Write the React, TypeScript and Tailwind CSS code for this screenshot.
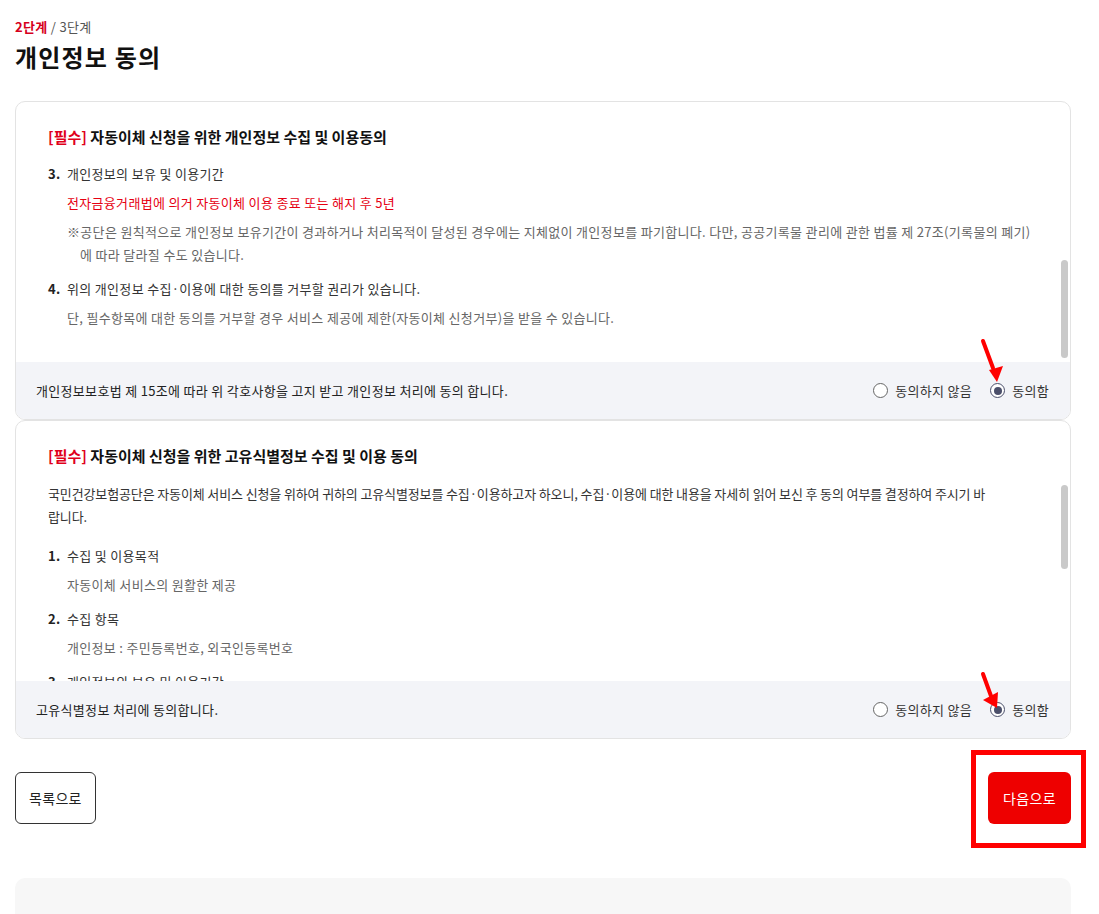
import { useEffect, useRef } from "react";

type Item = {
  no: string;
  title: string;
  body: React.ReactNode;
};

function Radio({ label, checked }: { label: string; checked?: boolean }) {
  return (
    <label className="flex items-center gap-[7px] text-[13px] text-[#333]">
      <span
        className={
          checked
            ? "flex h-[15px] w-[15px] items-center justify-center rounded-full border border-[#4b4f6a] bg-white"
            : "flex h-[15px] w-[15px] items-center justify-center rounded-full border border-[#666] bg-white"
        }
      >
        {checked && <span className="h-[8px] w-[8px] rounded-full bg-[#4b4f6a]" />}
      </span>
      {label}
    </label>
  );
}

function ItemList({ items }: { items: Item[] }) {
  return (
    <ol className="flex flex-col gap-[11px]">
      {items.map((it) => (
        <li key={it.no}>
          <div className="flex text-[13px] leading-[23px] text-[#333]">
            <span className="w-[19px] font-bold text-[#222]">{it.no}</span>
            <span>{it.title}</span>
          </div>
          <div className="mt-[6px] pl-[19px] text-[13px] leading-[23px] text-[#666]">{it.body}</div>
        </li>
      ))}
    </ol>
  );
}

function ConsentCard({
  title,
  statement,
  children,
  thumb,
  scrollToEnd,
}: {
  title: string;
  statement: string;
  children: React.ReactNode;
  thumb: string;
  scrollToEnd?: boolean;
}) {
  const ref = useRef<HTMLDivElement>(null);

  useEffect(() => {
    if (scrollToEnd && ref.current) ref.current.scrollTop = ref.current.scrollHeight;
  }, [scrollToEnd]);

  return (
    <section className="overflow-hidden rounded-[10px] border border-[#e3e3e3] bg-white">
      <h2 className="px-[32px] pt-[23px] text-[15px] font-bold leading-[24px] tracking-normal text-[#111]">
        <span className="text-[#e0001b]">[필수]</span> {title}
      </h2>
      <div className="relative mt-[14px]">
        <div ref={ref} className="h-[199px] overflow-y-auto pl-[32px] pr-[24px] [scrollbar-width:none]">
          {children}
        </div>
        {/* custom scrollbar thumb */}
        <div className={`absolute right-[2px] w-[7px] rounded-full bg-[#c9c9c9] ${thumb}`} />
      </div>
      <div className="flex h-[57px] items-center justify-between bg-[#f3f4f8] pl-[20px] pr-[21px]">
        <p className="text-[13px] text-[#222]">{statement}</p>
        <div className="flex items-center gap-[18px]">
          <Radio label="동의하지 않음" />
          <Radio label="동의함" checked />
        </div>
      </div>
    </section>
  );
}

const intro = (
  <p className="mb-[16px] text-[13px] leading-[23px] tracking-[-0.01em] text-[#333]">
    국민건강보험공단은 자동이체 서비스 신청을 위하여 귀하의 고유식별정보를 수집·이용하고자 하오니, 수집·이용에 대한
    내용을 자세히 읽어 보신 후 동의 여부를 결정하여 주시기 바<br />
    랍니다.
  </p>
);

const keepItem: Item = {
  no: "3.",
  title: "개인정보의 보유 및 이용기간",
  body: (
    <>
      <p className="text-[#e60012]">전자금융거래법에 의거 자동이체 이용 종료 또는 해지 후 5년</p>
      <p className="mt-[6px] pl-[13px] -indent-[13px]">
        ※공단은 원칙적으로 개인정보 보유기간이 경과하거나 처리목적이 달성된 경우에는 지체없이 개인정보를 파기합니다. 다만,
        공공기록물 관리에 관한 법률 제 27조(기록물의 폐기)
        <br />에 따라 달라질 수도 있습니다.
      </p>
    </>
  ),
};

const refuseItem: Item = {
  no: "4.",
  title: "위의 개인정보 수집·이용에 대한 동의를 거부할 권리가 있습니다.",
  body: "단, 필수항목에 대한 동의를 거부할 경우 서비스 제공에 제한(자동이체 신청거부)을 받을 수 있습니다.",
};

const personalItems: Item[] = [
  { no: "1.", title: "수집 및 이용목적", body: "자동이체 서비스의 원활한 제공" },
  { no: "2.", title: "수집 항목", body: "개인정보 : 성명, 생년월일, 휴대전화번호, 은행명, 계좌번호, 예금주명" },
  keepItem,
  refuseItem,
];

const uniqueItems: Item[] = [
  { no: "1.", title: "수집 및 이용목적", body: "자동이체 서비스의 원활한 제공" },
  { no: "2.", title: "수집 항목", body: "개인정보 : 주민등록번호, 외국인등록번호" },
  keepItem,
  refuseItem,
];

function Arrow({ className, line, head }: { className: string; line: number[]; head: string }) {
  return (
    <svg className={className} width="36" height="50" viewBox="0 0 36 50" fill="none">
      <line x1={line[0]} y1={line[1]} x2={line[2]} y2={line[3]} stroke="#f00" strokeWidth="4" strokeLinecap="round" />
      <polygon points={head} fill="#f00" />
    </svg>
  );
}

export default function App() {
  return (
    <div className="relative min-h-[914px] bg-white pl-[15px] pr-[28px] pt-[18px] font-['Noto_Sans_CJK_KR','Noto_Sans',sans-serif] tracking-[0.02em]">
      <p className="text-[13px] leading-[18px] text-[#555]">
        <b className="text-[#d6001c]">2단계</b> / 3단계
      </p>
      <h1 className="mt-[5px] text-[24px] font-bold leading-[32px] tracking-[0.05em] text-[#111]">개인정보 동의</h1>

      <div className="mt-[28px]">
        <ConsentCard
          title="자동이체 신청을 위한 개인정보 수집 및 이용동의"
          statement="개인정보보호법 제 15조에 따라 위 각호사항을 고지 받고 개인정보 처리에 동의 합니다."
          thumb="top-[97px] h-[98px]"
          scrollToEnd
        >
          {intro}
          <div className="pb-[33px]">
            <ItemList items={personalItems} />
          </div>
        </ConsentCard>
        <ConsentCard
          title="자동이체 신청을 위한 고유식별정보 수집 및 이용 동의"
          statement="고유식별정보 처리에 동의합니다."
          thumb="top-[3px] h-[84px]"
        >
          {intro}
          <div className="pb-[31px]">
            <ItemList items={uniqueItems} />
          </div>
        </ConsentCard>
      </div>

      <div className="mt-[33px] flex items-center justify-between">
        <button className="h-[52px] rounded-[6px] border border-[#333] bg-white px-[13px] text-[14px] text-[#222]">
          목록으로
        </button>
        <button className="h-[52px] w-[83px] rounded-[6px] bg-[#ee0000] text-[14px] text-white">다음으로</button>
      </div>

      <div className="mt-[54px] h-[60px] rounded-t-[10px] bg-[#f7f7f7]" />

      {/* annotation marks drawn over the screenshot */}
      <Arrow className="absolute left-[975px] top-[335px]" line={[8, 6, 18, 33]} head="14,35 28,31 22,47" />
      <Arrow className="absolute left-[975px] top-[665px]" line={[8, 9, 16, 31]} head="8,35 23,27 22,43" />
      <div className="pointer-events-none absolute left-[971px] top-[750px] h-[98px] w-[115px] border-[5px] border-[#ff0000]" />
    </div>
  );
}
